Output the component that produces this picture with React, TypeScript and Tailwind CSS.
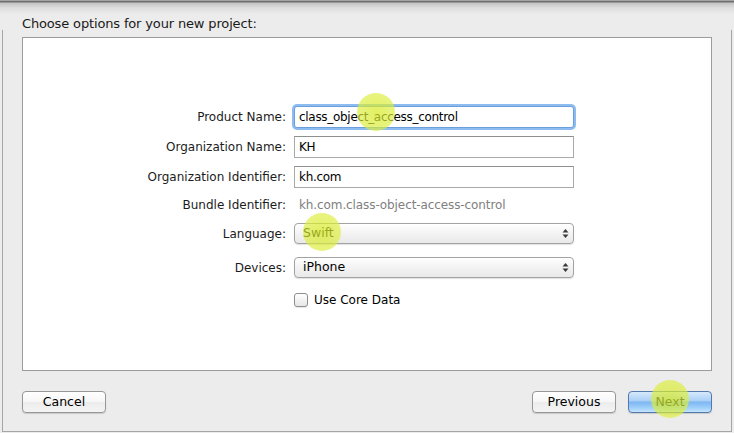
import React from 'react';

const font = { fontFamily: '"DejaVu Sans", "Liberation Sans", sans-serif' };

function Highlight({ x, y }: { x: number; y: number }) {
  return (
    <div
      className="pointer-events-none absolute h-[38px] w-[38px] rounded-full bg-[radial-gradient(circle,rgba(214,234,40,0.72)_0%,rgba(220,238,60,0.66)_70%,rgba(225,240,80,0.35)_92%,rgba(225,240,80,0)_100%)]"
      style={{ left: x - 19, top: y - 19 }}
    />
  );
}

function Field({ label, children, className = '' }: { label: string; children: React.ReactNode; className?: string }) {
  return (
    <div className={`flex items-center ${className}`}>
      <div className="w-[271px] pr-[8px] text-right text-[12px] text-[#1c1c1c]">{label}</div>
      {children}
    </div>
  );
}

function TextInput({ value, focused }: { value: string; focused?: boolean }) {
  return (
    <div
      className={`flex h-[22px] w-[280px] items-center border bg-white pl-[4px] text-[12px] tracking-[-0.3px] text-black ${
        focused
          ? 'rounded-[3px] border-[#6b9fdc] shadow-[0_0_0_2px_#8dbcf0]'
          : 'border-[#a9a9a9] border-t-[#8f8f8f]'
      }`}
    >
      {value}
    </div>
  );
}

function Popup({ value }: { value: string }) {
  return (
    <div className="flex h-[21px] w-[280px] items-center justify-between rounded-[4px] border border-[#a3a3a3] bg-[linear-gradient(#ffffff,#f3f3f3_50%,#e9e9e9)] pl-[8px] pr-[4px] text-[12.5px] text-black shadow-[0_1px_1px_rgba(0,0,0,0.12)]">
      <span>{value}</span>
      <svg width="7" height="11" viewBox="0 0 7 11">
        <path d="M3.5 1 L6.5 4.5 L0.5 4.5 Z" fill="#3a3a3a" />
        <path d="M3.5 10 L6.5 6.5 L0.5 6.5 Z" fill="#3a3a3a" />
      </svg>
    </div>
  );
}

function Button({ label, primary }: { label: string; primary?: boolean }) {
  return (
    <div
      className={`flex h-[22px] w-[84px] items-center justify-center rounded-[4px] border text-[12.5px] text-black shadow-[0_1px_1px_rgba(0,0,0,0.15)] ${
        primary
          ? 'border-[#5579ad] bg-[linear-gradient(#d6e9fc,#a9cff6_45%,#7cb6f2_50%,#9fd0fa_80%,#c4e4fd)]'
          : 'border-[#979797] bg-[linear-gradient(#ffffff,#f6f6f6_50%,#ececec_51%,#f4f4f4)]'
      }`}
    >
      {label}
    </div>
  );
}

export default function App() {
  return (
    <div className="relative flex h-[433px] w-[734px] flex-col overflow-hidden bg-[#ececec]" style={font}>
      <div className="relative h-[30px] bg-[linear-gradient(#d9d9d9,#6f6f6f_1px,#6f6f6f_2px,#c4c4c4_3px,#dedede_8px,#ececec_14px)]">
        <div className="absolute bottom-[-3px] left-[22px] text-[13px] tracking-[-0.15px] text-[#1a1a1a]">Choose options for your new project:</div>
      </div>
      <div className="mx-[2px] mb-px flex flex-1 flex-col border-x border-b border-[#a6a6a6]">
        <div className="mx-[19px] mt-[7px] flex h-[334px] flex-col border border-[#9c9c9c] bg-white pt-[68px]">
          <Field label="Product Name:">
            <TextInput value="class_object_access_control" focused />
          </Field>
          <Field label="Organization Name:" className="mt-[8px]">
            <TextInput value="KH" />
          </Field>
          <Field label="Organization Identifier:" className="mt-[8px]">
            <TextInput value="kh.com" />
          </Field>
          <Field label="Bundle Identifier:" className="mt-[6px] h-[22px]">
            <span className="pl-[5px] text-[12px] tracking-[-0.1px] text-[#808080]">kh.com.class-object-access-control</span>
          </Field>
          <Field label="Language:" className="mt-[7px]">
            <Popup value="Swift" />
          </Field>
          <Field label="Devices:" className="mt-[13px]">
            <Popup value="iPhone" />
          </Field>
          <div className="ml-[271px] mt-[13px] flex items-center gap-[6px]">
            <div className="h-[14px] w-[14px] rounded-[3px] border border-[#8e8e8e] bg-[linear-gradient(#ffffff,#e6e6e6)] shadow-[0_1px_1px_rgba(0,0,0,0.1)]" />
            <span className="text-[12px] text-black">Use Core Data</span>
          </div>
        </div>
        <div className="mx-[19px] mt-[20px] flex items-center">
          <Button label="Cancel" />
          <div className="flex-1" />
          <Button label="Previous" />
          <div className="w-[12px]" />
          <Button label="Next" primary />
        </div>
      </div>
      <Highlight x={376} y={112} />
      <Highlight x={322} y={232} />
      <Highlight x={670} y={399} />
    </div>
  );
}
